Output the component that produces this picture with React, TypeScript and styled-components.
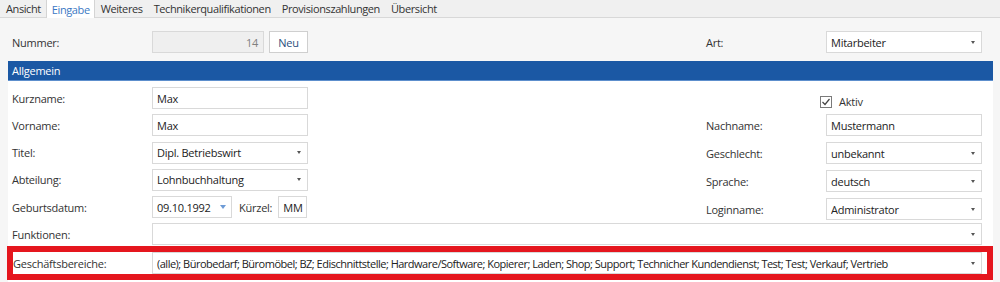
import React from "react";
import styled, { createGlobalStyle } from "styled-components";

const GlobalStyle = createGlobalStyle`
  html, body { margin: 0; padding: 0; }
  body {
    background: #f6f6f6;
    font-family: "Open Sans", "Noto Sans", "Liberation Sans", sans-serif;
    font-size: 11px;
    letter-spacing: -0.25px;
    color: #333;
  }
`;

const Page = styled.div`
  width: 1000px;
  height: 282px;
  overflow: hidden;
`;

const TabBar = styled.div`
  display: flex;
  height: 17px;
  background: #f0f0f0;
  border-bottom: 1px solid #d8d8d8;
`;

const Tab = styled.div<{ $active?: boolean }>`
  display: flex;
  align-items: center;
  height: ${(p) => (p.$active ? "18px" : "17px")};
  padding: 0 4px 0 5px;
  background: ${(p) => (p.$active ? "#ffffff" : "transparent")};
  color: ${(p) => (p.$active ? "#3b78c4" : "#333")};
  border-left: 1px solid ${(p) => (p.$active ? "#d4d4d4" : "transparent")};
  border-right: 1px solid ${(p) => (p.$active ? "#d4d4d4" : "transparent")};
  letter-spacing: -0.4px;
  white-space: nowrap;
`;

const Content = styled.div`
  padding: 13px 7px 0 8px;
`;

const TopRow = styled.div`
  display: flex;
  justify-content: space-between;
  padding: 0 11px 0 4px;
  height: 22px;
`;

const Field = styled.div`
  display: flex;
  align-items: center;
  height: 22px;
`;

const Label = styled.div<{ $w: number }>`
  width: ${(p) => p.$w}px;
  flex: none;
  color: #333;
  white-space: nowrap;
`;

const Box = styled.div<{ $w: number; $disabled?: boolean }>`
  box-sizing: border-box;
  width: ${(p) => p.$w}px;
  height: 22px;
  flex: none;
  display: flex;
  align-items: center;
  padding: 0 4px;
  background: ${(p) => (p.$disabled ? "#efefef" : "#ffffff")};
  border: 1px solid #d9d9d9;
  color: #222;
  white-space: nowrap;
  overflow: hidden;
`;

const NumberBox = styled(Box)`
  justify-content: flex-end;
  color: #808080;
  padding-right: 5px;
`;

const Button = styled.div`
  box-sizing: border-box;
  margin-left: 5px;
  width: 39px;
  height: 22px;
  display: flex;
  align-items: center;
  justify-content: center;
  background: #fff;
  border: 1px solid #cfcfcf;
  color: #2c4e80;
`;

const SelectText = styled.span<{ $tight?: boolean }>`
  flex: 1;
  overflow: hidden;
  letter-spacing: ${(p) => (p.$tight ? "-0.5px" : "inherit")};
`;

const Arrow = styled.span`
  flex: none;
  width: 0;
  height: 0;
  margin: 0 2px 0 4px;
  border-left: 2.5px solid transparent;
  border-right: 2.5px solid transparent;
  border-top: 3px solid #555;
`;

const BlueArrow = styled.span`
  flex: none;
  width: 0;
  height: 0;
  margin: 0 1px 0 4px;
  border-left: 3.5px solid transparent;
  border-right: 3.5px solid transparent;
  border-top: 4px solid #6d9bd6;
`;

const Group = styled.div`
  margin-top: 8px;
  width: 985px;
  background: #ffffff;
  height: 230px;
`;

const GroupHeader = styled.div`
  height: 19px;
  display: flex;
  align-items: center;
  padding-left: 4px;
  background: #1b58a4;
  border-bottom: 1px solid #5d8fcd;
  color: #fff;
`;

const GroupBody = styled.div`
  padding: 6px 11px 0 4px;
`;

const Columns = styled.div`
  display: flex;
  justify-content: space-between;
`;

const Column = styled.div<{ $gap: number }>`
  display: flex;
  flex-direction: column;
  gap: ${(p) => p.$gap}px;
`;

const CheckRow = styled.div`
  display: flex;
  align-items: flex-end;
  height: 21px;
  padding-left: 114px;
  gap: 7px;

  svg {
    display: block;
  }
`;

const CheckLabel = styled.span`
  line-height: 13px;
`;

const FullRow = styled(Field)<{ $top?: number }>`
  margin-top: ${(p) => p.$top ?? 0}px;
`;

const Highlight = styled.div`
  margin: 1px -11px 0 -5px;
  border: 6px solid #e5161e;
  padding: 0 5px 0 0;
`;

const Small = styled.span`
  margin: 0 6px 0 7px;
`;

function Select({ w, value, tight }: { w: number; value: string; tight?: boolean }) {
  return (
    <Box $w={w}>
      <SelectText $tight={tight}>{value}</SelectText>
      <Arrow />
    </Box>
  );
}

function CheckIcon() {
  return (
    <svg width="12" height="12" viewBox="0 0 12 12">
      <rect x="0.5" y="0.5" width="11" height="11" fill="#fff" stroke="#7a7a7a" />
      <path d="M2.5 6 L5 8.5 L9.5 3" fill="none" stroke="#444" strokeWidth="1.2" />
    </svg>
  );
}

const tabs = [
  "Ansicht",
  "Eingabe",
  "Weiteres",
  "Technikerqualifikationen",
  "Provisionszahlungen",
  "Übersicht",
];

export default function App() {
  return (
    <Page>
      <GlobalStyle />
      <TabBar>
        {tabs.map((t) => (
          <Tab key={t} $active={t === "Eingabe"}>
            {t}
          </Tab>
        ))}
      </TabBar>
      <Content>
        <TopRow>
          <Field>
            <Label $w={140}>Nummer:</Label>
            <NumberBox $w={112} $disabled>
              14
            </NumberBox>
            <Button>Neu</Button>
          </Field>
          <Field>
            <Label $w={120}>Art:</Label>
            <Select w={156} value="Mitarbeiter" />
          </Field>
        </TopRow>
        <Group>
          <GroupHeader>Allgemein</GroupHeader>
          <GroupBody>
            <Columns>
              <Column $gap={5.25}>
                <Field>
                  <Label $w={140}>Kurzname:</Label>
                  <Box $w={156}>Max</Box>
                </Field>
                <Field>
                  <Label $w={140}>Vorname:</Label>
                  <Box $w={156}>Max</Box>
                </Field>
                <Field>
                  <Label $w={140}>Titel:</Label>
                  <Select w={156} value="Dipl. Betriebswirt" />
                </Field>
                <Field>
                  <Label $w={140}>Abteilung:</Label>
                  <Select w={156} value="Lohnbuchhaltung" />
                </Field>
                <Field>
                  <Label $w={140}>Geburtsdatum:</Label>
                  <Box $w={80}>
                    <SelectText>09.10.1992</SelectText>
                    <BlueArrow />
                  </Box>
                  <Small>Kürzel:</Small>
                  <Box $w={29}>MM</Box>
                </Field>
              </Column>
              <Column $gap={6}>
                <CheckRow>
                  <CheckIcon />
                  <CheckLabel>Aktiv</CheckLabel>
                </CheckRow>
                <Field>
                  <Label $w={120}>Nachname:</Label>
                  <Box $w={156}>Mustermann</Box>
                </Field>
                <Field>
                  <Label $w={120}>Geschlecht:</Label>
                  <Select w={156} value="unbekannt" />
                </Field>
                <Field>
                  <Label $w={120}>Sprache:</Label>
                  <Select w={156} value="deutsch" />
                </Field>
                <Field>
                  <Label $w={120}>Loginname:</Label>
                  <Select w={156} value="Administrator" />
                </Field>
              </Column>
            </Columns>
            <FullRow $top={3}>
              <Label $w={140}>Funktionen:</Label>
              <Select w={830} value="" />
            </FullRow>
            <Highlight>
              <Field>
                <Label $w={139}>Geschäftsbereiche:</Label>
                <Select
                  w={830}
                  tight
                  value="(alle); Bürobedarf; Büromöbel; BZ; Edischnittstelle; Hardware/Software; Kopierer; Laden; Shop; Support; Technicher Kundendienst; Test; Test; Verkauf; Vertrieb"
                />
              </Field>
            </Highlight>
          </GroupBody>
        </Group>
      </Content>
    </Page>
  );
}
